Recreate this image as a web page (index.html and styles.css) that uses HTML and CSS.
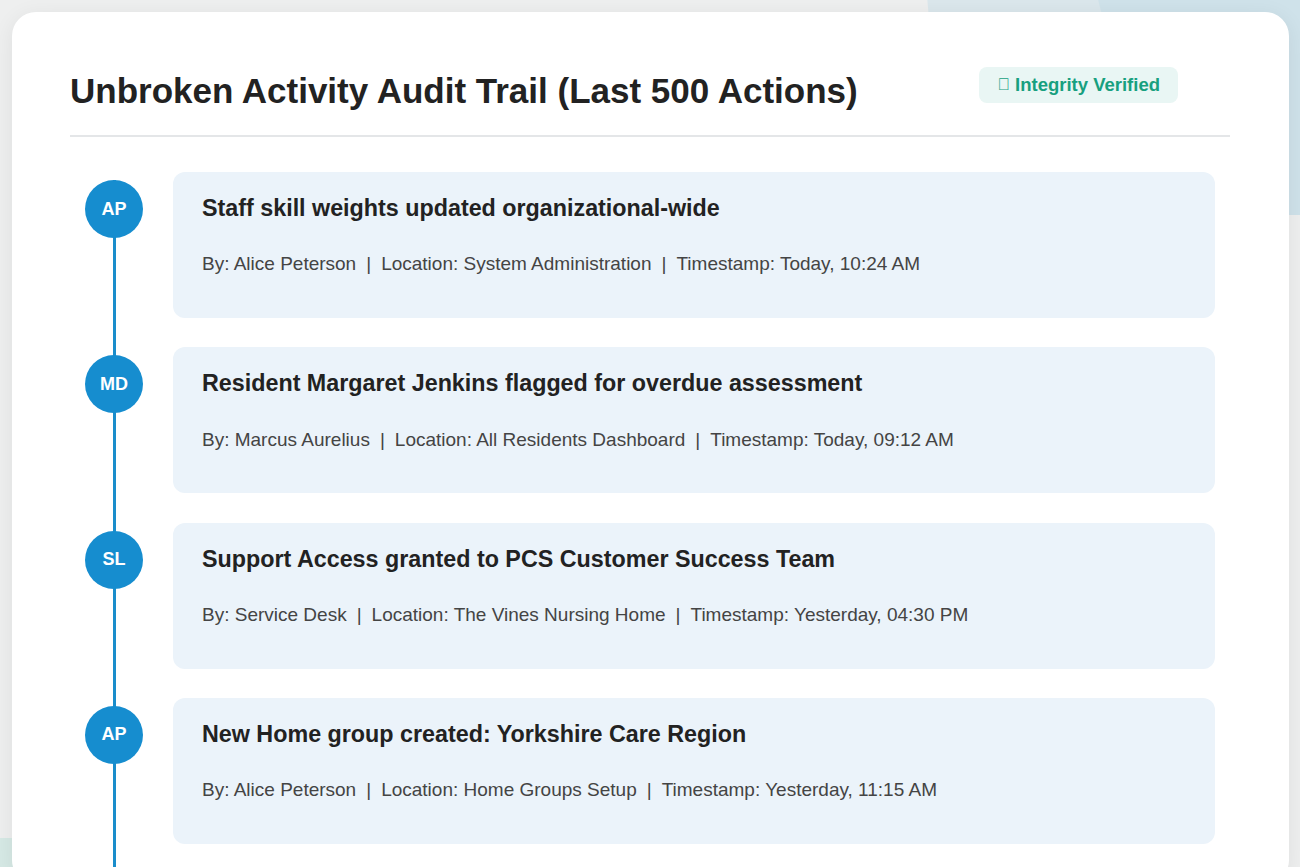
FILE: index.html
```html
<!DOCTYPE html>
<html lang="en">
<head>
<meta charset="utf-8">
<title>Audit Trail</title>
<link rel="stylesheet" href="styles.css">
</head>
<body>
<div class="blob blob-tr"></div>
<div class="blob blob-tr2"></div>
<div class="blob blob-bl"></div>
<main class="panel">
  <header class="panel-head">
    <h1 class="panel-title">Unbroken Activity Audit Trail (Last 500 Actions)</h1>
    <span class="badge"><span class="badge-icon">&#xf00c;</span> Integrity Verified</span>
  </header>
  <ol class="timeline">
    <li class="entry">
      <div class="marker"><span class="avatar">AP</span></div>
      <div class="entry-card">
        <h2 class="entry-title">Staff skill weights updated organizational-wide</h2>
        <p class="entry-meta">By: Alice Peterson<span class="sep">|</span>Location: System Administration<span class="sep">|</span>Timestamp: Today, 10:24 AM</p>
      </div>
    </li>
    <li class="entry">
      <div class="marker"><span class="avatar">MD</span></div>
      <div class="entry-card">
        <h2 class="entry-title">Resident Margaret Jenkins flagged for overdue assessment</h2>
        <p class="entry-meta">By: Marcus Aurelius<span class="sep">|</span>Location: All Residents Dashboard<span class="sep">|</span>Timestamp: Today, 09:12 AM</p>
      </div>
    </li>
    <li class="entry">
      <div class="marker"><span class="avatar">SL</span></div>
      <div class="entry-card">
        <h2 class="entry-title">Support Access granted to PCS Customer Success Team</h2>
        <p class="entry-meta">By: Service Desk<span class="sep">|</span>Location: The Vines Nursing Home<span class="sep">|</span>Timestamp: Yesterday, 04:30 PM</p>
      </div>
    </li>
    <li class="entry">
      <div class="marker"><span class="avatar">AP</span></div>
      <div class="entry-card">
        <h2 class="entry-title">New Home group created: Yorkshire Care Region</h2>
        <p class="entry-meta">By: Alice Peterson<span class="sep">|</span>Location: Home Groups Setup<span class="sep">|</span>Timestamp: Yesterday, 11:15 AM</p>
      </div>
    </li>
  </ol>
</main>
</body>
</html>
```

FILE: styles.css
```css
* { box-sizing: border-box; }

html, body { margin: 0; }

body {
  position: relative;
  padding: 12px 11px 0 12px;
  background: #eeefef;
  font-family: "Liberation Sans", Arial, sans-serif;
  color: #222;
  overflow: hidden;
  height: 867px;
}

.blob {
  position: absolute;
  z-index: 0;
  pointer-events: none;
}

.blob-tr {
  top: -40px;
  right: -60px;
  width: 425px;
  height: 255px;
  background: #dbe7ec;
  transform: skewX(5deg);
}

.blob-tr2 {
  top: -40px;
  right: -60px;
  width: 240px;
  height: 255px;
  background: #cfe2ea;
  transform: skewX(14deg);
}

.blob-bl {
  top: 838px;
  left: 0;
  width: 320px;
  height: 200px;
  background: #d6e9e5;
}

.panel {
  position: relative;
  z-index: 1;
  background: #ffffff;
  border-radius: 24px;
  padding: 55px 59px 40px 58px;
  box-shadow: 0 4px 22px rgba(0, 0, 0, 0.07);
}

.panel-head {
  display: flex;
  justify-content: space-between;
  align-items: flex-start;
  padding-bottom: 23px;
  border-bottom: 2px solid #e4e6e8;
}

.panel-title {
  margin: 3px 0 0;
  font-size: 35px;
  line-height: 1.2;
  font-weight: 700;
  color: #222;
}

.badge {
  display: inline-flex;
  align-items: center;
  height: 36px;
  margin-right: 52px;
  padding: 0 18px;
  border-radius: 8px;
  background: #e9f6f4;
  color: #17a07f;
  font-size: 18.5px;
  font-weight: 700;
  white-space: pre;
}

.badge-icon {
  font-size: 17px;
  font-weight: 400;
}

.timeline {
  position: relative;
  list-style: none;
  margin: 35px 0 0;
  padding: 0;
  display: flex;
  flex-direction: column;
  gap: 29.3px;
}

.timeline::before {
  content: "";
  position: absolute;
  left: 42.5px;
  top: 8px;
  bottom: -60px;
  width: 3px;
  background: #1a8dcb;
}

.entry {
  display: grid;
  grid-template-columns: 88px 1fr;
  column-gap: 15px;
  margin-right: 15px;
}

.marker {
  display: flex;
  justify-content: center;
  padding-top: 8px;
}

.avatar {
  position: relative;
  z-index: 1;
  width: 58px;
  height: 58px;
  border-radius: 50%;
  background: #168dcf;
  color: #ffffff;
  font-size: 18px;
  font-weight: 700;
  display: flex;
  align-items: center;
  justify-content: center;
}

.entry-card {
  background: #ebf3fa;
  border-radius: 12px;
  padding: 21px 29px 40px;
  min-height: 146px;
}

.entry-title {
  margin: 0;
  font-size: 23.3px;
  line-height: 1.3;
  font-weight: 700;
  color: #222;
}

.entry-meta {
  margin: 28px 0 0;
  font-size: 19px;
  line-height: 1.4;
  color: #444;
}

.sep {
  margin: 0 10px;
}
```
